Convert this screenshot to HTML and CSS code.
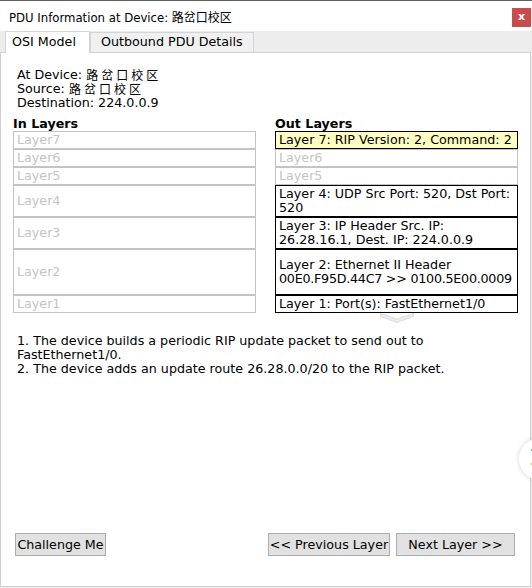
FILE: index.html
```
<!DOCTYPE html>
<html>
<head>
<meta charset="utf-8">
<link rel="stylesheet" href="styles.css">
</head>
<body>
<div class="window">
  <div class="titlebar">
    <span class="title">PDU Information at Device: <span class="cjk-title">路岔口校区</span></span>
    <span class="close">x</span>
  </div>
  <div class="tabs">
    <div class="tab active">OSI Model</div>
    <div class="tab">Outbound PDU Details</div>
  </div>
  <div class="panel">
    <div class="info">
      <div class="info-line">At Device: <span class="cjk">路岔口校区</span></div>
      <div class="info-line">Source: <span class="cjk">路岔口校区</span></div>
      <div class="info-line">Destination: 224.0.0.9</div>
    </div>
    <div class="layers">
      <div class="col">
        <div class="heading">In Layers</div>
        <div class="box dim h18">Layer7</div>
        <div class="box dim h18">Layer6</div>
        <div class="box dim h18">Layer5</div>
        <div class="box dim h32">Layer4</div>
        <div class="box dim h32">Layer3</div>
        <div class="box dim h46">Layer2</div>
        <div class="box dim h18">Layer1</div>
      </div>
      <div class="col">
        <div class="heading">Out Layers</div>
        <div class="box active-layer h18">Layer 7: RIP Version: 2, Command: 2</div>
        <div class="box dim h18">Layer6</div>
        <div class="box dim h18">Layer5</div>
        <div class="box on h32"><span>Layer 4: UDP Src Port: 520, Dst Port:<br>520</span></div>
        <div class="box on h32"><span>Layer 3: IP Header Src. IP:<br>26.28.16.1, Dest. IP: 224.0.0.9</span></div>
        <div class="box on h46"><span>Layer 2: Ethernet II Header<br><span class="tight">00E0.F95D.44C7 &gt;&gt; 0100.5E00.0009</span></span></div>
        <div class="box on h18">Layer 1: Port(s): FastEthernet1/0</div>
      </div>
      <div class="col"></div>
      <div class="col chevron-cell">
        <svg class="chevron" width="34" height="10" viewBox="0 0 34 10">
          <path d="M0.5 0.5 L17 6 L33.5 0.5 L33.5 3.5 L17 9.5 L0.5 3.5 Z" fill="#ececec" stroke="#dcdcdc" stroke-width="1"/>
        </svg>
      </div>
    </div>
    <div class="steps">
      <div>1. The device builds a periodic RIP update packet to send out to FastEthernet1/0.</div>
      <div>2. The device adds an update route 26.28.0.0/20 to the RIP packet.</div>
    </div>
    <div class="buttons">
      <button class="btn challenge">Challenge Me</button>
      <div class="nav">
        <button class="btn prev">&lt;&lt; Previous Layer</button>
        <button class="btn next">Next Layer &gt;&gt;</button>
      </div>
    </div>
  </div>
  <div class="knob"><span class="dot g"></span><span class="dot o"></span></div>
</div>
</body>
</html>
```
FILE: styles.css
```
* { box-sizing: border-box; }
html, body { margin: 0; padding: 0; }
body {
  width: 532px;
  height: 588px;
  overflow: hidden;
  background: #ededed;
  font-family: "DejaVu Sans", "Noto Sans CJK SC", sans-serif;
  font-size: 12.7px;
  line-height: 14px;
  color: #000;
}
.window {
  position: relative;
  width: 532px;
  height: 588px;
  overflow: hidden;
}
.titlebar {
  height: 31px;
  background: #fff;
  border-top: 1px solid #5b625e;
  display: flex;
  align-items: flex-start;
  justify-content: space-between;
  padding-left: 9px;
}
.title {
  margin-top: 9px;
  line-height: 14px;
  font-family: "DejaVu Sans Condensed", "DejaVu Sans", "Noto Sans CJK SC", sans-serif;
  font-size: 13px;
}
.cjk-title {
  font-family: "Noto Sans CJK SC", sans-serif;
  font-size: 12px;
  line-height: 14px;
}
.info-line {
  height: 14px;
  line-height: 14px;
}
.cjk {
  font-family: "Noto Sans CJK SC", sans-serif;
  font-size: 12px;
  line-height: 12px;
  letter-spacing: 3px;
  display: inline-block;
  vertical-align: top;
  margin-top: 1px;
}
.close {
  margin-top: 7px;
  width: 19px;
  height: 19px;
  background: #c94c4c;
  color: #fff;
  font-weight: bold;
  font-size: 11px;
  line-height: 17px;
  text-align: center;
  margin-right: 1px;
}
.tabs {
  height: 21px;
  display: flex;
  align-items: flex-end;
  padding-left: 5px;
}
.tab {
  height: 20px;
  padding: 0 10px 0 10px;
  line-height: 18px;
  background: #f0f0f0;
  border: 1px solid #d4d4d4;
  border-bottom: none;
}
.tab.active {
  position: relative;
  z-index: 1;
  height: 22px;
  margin-bottom: -1px;
  background: #fff;
  padding: 3px 6px 0 6px;
  line-height: 14px;
  width: 85px;
}
.panel {
  width: 531px;
  height: 535px;
  background: #fff;
  border: 1px solid #d0d0d0;
  padding: 15px 12px 30px 12px;
  display: flex;
  flex-direction: column;
}
.info {
  padding-left: 4px;
}
.layers {
  margin-top: 7px;
  display: grid;
  grid-template-columns: 243px 243px;
  column-gap: 19px;
}
.heading {
  font-weight: bold;
  height: 14px;
  line-height: 14px;
}
.box {
  border: 1px solid #c4c4c4;
  padding: 0 3px;
  display: flex;
  align-items: center;
  line-height: 14px;
  white-space: nowrap;
  overflow: hidden;
}
.tight { letter-spacing: -0.25px; }
.box.dim { color: #c4c4c4; }
.box.on { border-color: #000; }
.box.active-layer { border-color: #000; background: #ffffc4; }
.h18 { height: 18px; }
.h32 { height: 32px; }
.h46 { height: 46px; }
.chevron-cell {
  height: 21px;
  display: flex;
  justify-content: center;
  align-items: flex-start;
}
.chevron { display: block; margin-top: 0; }
.steps { padding-left: 4px; }
.buttons {
  margin-top: auto;
  display: flex;
  justify-content: space-between;
  padding-left: 2px;
  padding-right: 3px;
}
.nav { display: flex; gap: 6px; }
.btn {
  height: 23px;
  padding: 0;
  font-family: "DejaVu Sans", sans-serif;
  font-size: 12.7px;
  color: #000;
  background: #e1e1e1;
  border: 1px solid #adadad;
  border-radius: 0;
}
.challenge { width: 91px; }
.prev { width: 122px; }
.next { width: 119px; }
.knob {
  position: absolute;
  left: 519px;
  top: 438px;
  width: 42px;
  height: 42px;
  border-radius: 50%;
  background: #fff;
  box-shadow: 0 0 4px 1px rgba(0,0,0,0.12);
}
.dot {
  position: absolute;
  left: 12px;
  width: 2px;
  height: 2px;
}
.dot.g { top: 11px; background: #6fc39b; }
.dot.o { top: 25px; background: #e9b36b; }
```
